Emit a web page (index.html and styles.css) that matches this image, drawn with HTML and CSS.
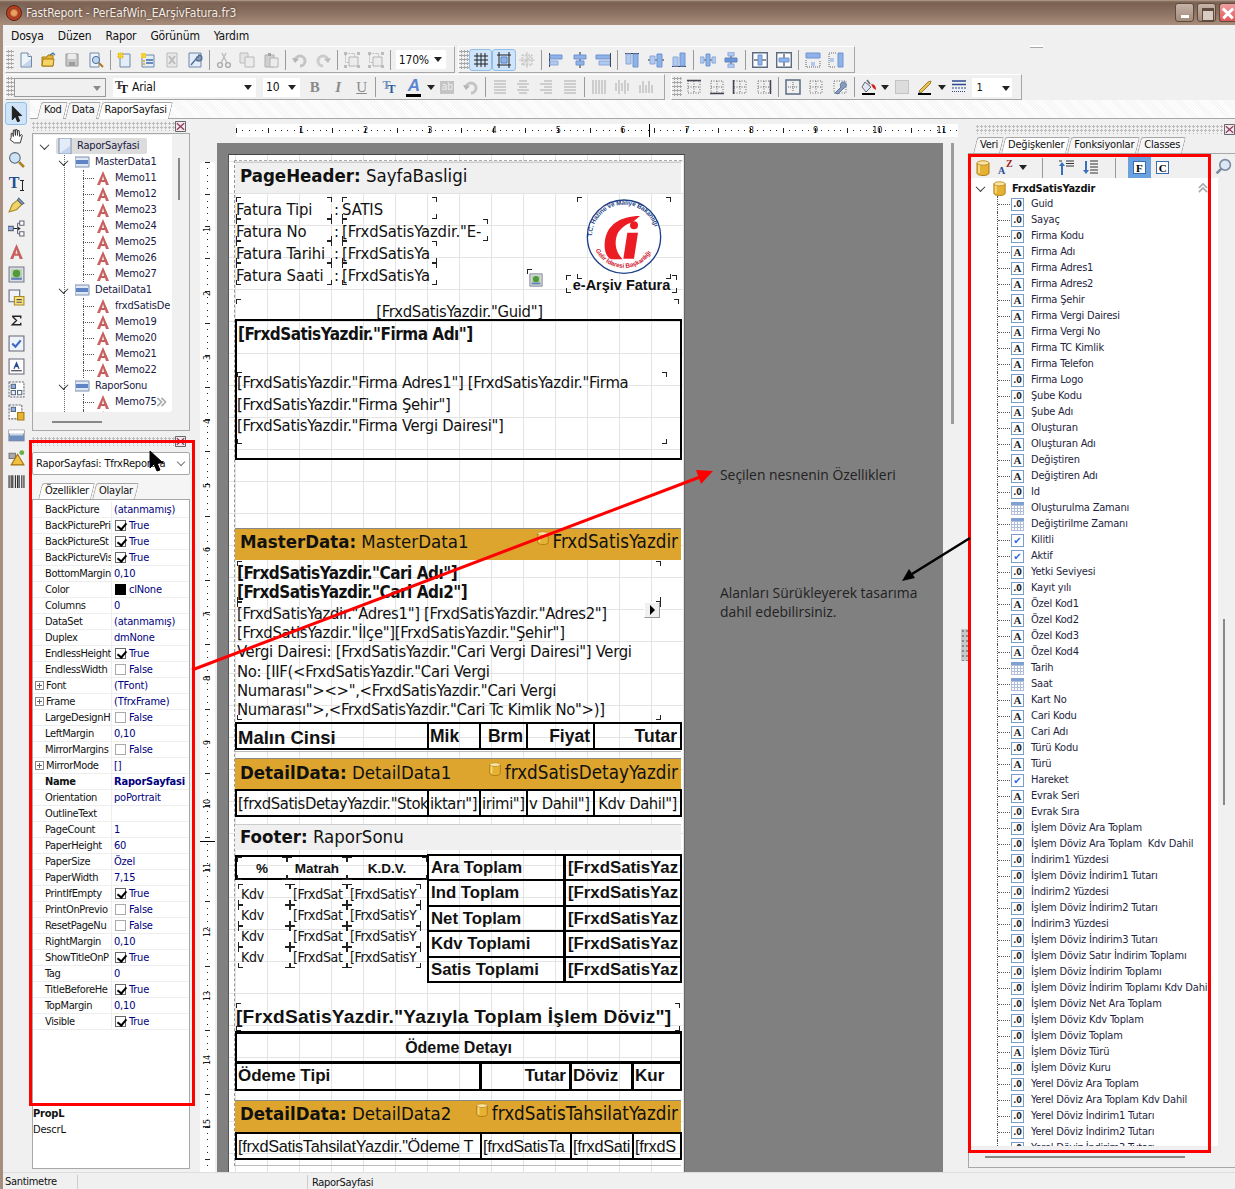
FILE: index.html
```html
<!DOCTYPE html>
<html lang="tr">
<head>
<meta charset="utf-8">
<title>FastReport</title>
<link rel="stylesheet" href="styles.css">
</head>
<body>
<svg class="defs" width="0" height="0">
  <symbol id="new" viewBox="0 0 16 16"><path d="M3 1h7l3.5 3.5V15H3z" fill="#eef3fa" stroke="#6f88a8"/><path d="M10 1v3.5h3.5" fill="#fff" stroke="#6f88a8"/><path d="M4 14h9V7z" fill="#c6d6ea"/></symbol>
  <symbol id="open" viewBox="0 0 16 16"><path d="M1 5h5l1-2h5v11H1z" fill="#e8b530" stroke="#a67a10"/><path d="M2 7h11l-1 7H1z" fill="#f6d568" stroke="#a67a10"/><path d="M9 3l3-2 2 2" fill="none" stroke="#3a78c0" stroke-width="1.3"/></symbol>
  <symbol id="save" viewBox="0 0 16 16"><path d="M2 2h12v12H2z" fill="#c6c6c6" stroke="#9a9a9a"/><path d="M4 2h8v5H4z" fill="#ececec"/><path d="M5 10h6v4H5z" fill="#9d9d9d"/></symbol>
  <symbol id="prev" viewBox="0 0 16 16"><path d="M2 1h9v14H2z" fill="#eef3fa" stroke="#6f88a8"/><circle cx="8" cy="8" r="3.6" fill="#bcd6f2" stroke="#4f6f98"/><path d="M11 11l4 4" stroke="#b07818" stroke-width="2"/></symbol>
  <symbol id="page" viewBox="0 0 16 16"><path d="M3 2h10v13H3z" fill="#e3ecf7" stroke="#6f88a8"/><path d="M1 1h5v5H1z" fill="#f4d030" stroke="#d8a810" stroke-dasharray="1 1"/></symbol>
  <symbol id="dlg" viewBox="0 0 16 16"><path d="M2 3h12v12H2z" fill="#e3ecf7" stroke="#6f88a8"/><path d="M1 1h5v5H1z" fill="#f4d030"/><path d="M6 8h7M6 11h7" stroke="#3a6ab0" stroke-width="1.5"/><path d="M3 8h2v2H3zM3 11h2v2H3z" fill="#e8b530"/></symbol>
  <symbol id="del" viewBox="0 0 16 16"><path d="M3 1h10v14H3z" fill="#e8e8e8" stroke="#bbb"/><path d="M5 4l6 8M11 4l-6 8" stroke="#bbb" stroke-width="2"/></symbol>
  <symbol id="opt" viewBox="0 0 16 16"><path d="M2 1h12v14H2z" fill="#e3ecf7" stroke="#6f88a8"/><path d="M4 13l5-6M9 7a3 3 0 1 0 3-4l-1 2h-1z" fill="#8c9cb0" stroke="#4f6f98" stroke-width="1.4"/></symbol>
  <symbol id="cut" viewBox="0 0 16 16"><path d="M10 1L5 11M6 1l5 10" stroke="#bcbcbc" stroke-width="1.4"/><circle cx="4" cy="13" r="2.4" fill="none" stroke="#aaa" stroke-width="1.4"/><circle cx="12" cy="13" r="2.4" fill="none" stroke="#aaa" stroke-width="1.4"/></symbol>
  <symbol id="copy" viewBox="0 0 16 16"><path d="M1 1h8v10H1z" fill="#e4e4e4" stroke="#bcbcbc"/><path d="M6 5h9v10H6z" fill="#ececec" stroke="#b8b8b8"/></symbol>
  <symbol id="paste" viewBox="0 0 16 16"><path d="M2 3h9v12H2z" fill="#d0d0d0" stroke="#b0b0b0"/><path d="M5 1h3v3H5z" fill="#a4a4a4"/><path d="M7 6h8v9H7z" fill="#ececec" stroke="#b4b4b4"/></symbol>
  <symbol id="undo" viewBox="0 0 16 16"><path d="M3 9a5 5 0 1 1 5 5" fill="none" stroke="#c4c4c4" stroke-width="3"/><path d="M0 6l3 5 4-4z" fill="#b4b4b4"/></symbol>
  <symbol id="redo" viewBox="0 0 16 16"><path d="M13 9a5 5 0 1 0-5 5" fill="none" stroke="#cccccc" stroke-width="3"/><path d="M16 6l-3 5-4-4z" fill="#bcbcbc"/></symbol>
  <symbol id="grp" viewBox="0 0 16 16"><path d="M1.5 1.5h9v9h-9z" fill="none" stroke="#bcbcbc" stroke-dasharray="2 1"/><path d="M5 5h9v9H5z" fill="#ececec" stroke="#b4b4b4"/><path d="M0 0h3v3H0zM13 0h3v3h-3zM0 13h3v3H0zM13 13h3v3h-3z" fill="#bcbcbc"/></symbol>
  <symbol id="grid" viewBox="0 0 16 16"><path d="M1 4h14M1 8h14M1 12h14M4 1v14M8 1v14M12 1v14" stroke="#222" fill="none"/></symbol>
  <symbol id="galign" viewBox="0 0 16 16"><path d="M1 3h14M1 13h14M3 0v16M13 0v16" stroke="#222" fill="none"/><path d="M5 5h6v6H5z" fill="#8fb3e8" stroke="#5b83c0"/></symbol>
  <symbol id="fit" viewBox="0 0 16 16"><path d="M3 3h10v10H3z" fill="#e8e8e8" stroke="#bcbcbc" stroke-dasharray="2 1"/><path d="M3 13L13 3M8 0v16M0 8h16" stroke="#c4c4c4"/></symbol>
  <symbol id="al1" viewBox="0 0 16 16"><path d="M1.500 1v14" stroke="#445"/><path d="M2 3h12v4H2z" fill="#8fb3e8" stroke="#6e94d0"/><path d="M2 9h8v4H2z" fill="#b0caf0" stroke="#8aa8d8"/></symbol>
  <symbol id="al2" viewBox="0 0 16 16"><path d="M8 0v16" stroke="#222"/><path d="M2 3h12v4H2z" fill="#8fb3e8" stroke="#6e94d0"/><path d="M4 9h8v4H4z" fill="#8fb3e8" stroke="#6e94d0"/></symbol>
  <symbol id="al3" viewBox="0 0 16 16"><path d="M1 3h14v4H1z" fill="#8fb3e8" stroke="#6e94d0"/><path d="M4 9h11v4H4z" fill="#b0caf0" stroke="#8aa8d8"/><path d="M15.500 1v14" stroke="#445"/></symbol>
  <symbol id="al4" viewBox="0 0 16 16"><path d="M1 1.500h14" stroke="#445"/><path d="M2 2h5v10H2z" fill="#b0caf0" stroke="#8aa8d8"/><path d="M9 2h5v13H9z" fill="#8fb3e8" stroke="#6e94d0"/></symbol>
  <symbol id="al5" viewBox="0 0 16 16"><path d="M0 8h16" stroke="#222"/><path d="M2 4h5v8H2z" fill="#b0caf0" stroke="#8aa8d8"/><path d="M9 2h5v13H9z" fill="#8fb3e8" stroke="#6e94d0"/></symbol>
  <symbol id="al6" viewBox="0 0 16 16"><path d="M1 14.500h14" stroke="#445"/><path d="M2 5h5v9H2z" fill="#b0caf0" stroke="#8aa8d8"/><path d="M9 1h5v13H9z" fill="#8fb3e8" stroke="#6e94d0"/></symbol>
  <symbol id="dist1" viewBox="0 0 16 16"><path d="M0 8h16" stroke="#222"/><path d="M0 5h4v6H0zM12 5h4v6h-4z" fill="#b0caf0" stroke="#8aa8d8"/><path d="M6 2h4v12H6z" fill="#8fb3e8" stroke="#6e94d0"/></symbol>
  <symbol id="dist2" viewBox="0 0 16 16"><path d="M8 0v16" stroke="#222"/><path d="M5 0h6v4H5zM5 12h6v4H5z" fill="#b0caf0" stroke="#8aa8d8"/><path d="M2 6h12v4H2z" fill="#6e94d8" stroke="#5b83c0"/></symbol>
  <symbol id="cen1" viewBox="0 0 16 16"><path d="M.7.7h14.600v14.600H.7z" fill="#fff" stroke="#5b6c80" stroke-width="1.4"/><path d="M2 8h12" stroke="#222"/><path d="M6 3h4v10H6z" fill="#8fb3e8" stroke="#6e94d0"/></symbol>
  <symbol id="cen2" viewBox="0 0 16 16"><path d="M.7.7h14.600v14.600H.7z" fill="#fff" stroke="#5b6c80" stroke-width="1.4"/><path d="M8 2v12" stroke="#222"/><path d="M3 6h10v4H3z" fill="#8fb3e8" stroke="#6e94d0"/></symbol>
  <symbol id="size1" viewBox="0 0 16 16"><path d="M1 1h14v5H1z" fill="#8fb3e8" stroke="#6e94d0"/><path d="M1 8v7h14V8" fill="none" stroke="#666" stroke-dasharray="1 1"/><path d="M6 10h4v4H6z" fill="#b0caf0"/></symbol>
  <symbol id="size2" viewBox="0 0 16 16"><path d="M10 1h5v14h-5z" fill="#8fb3e8" stroke="#6e94d0"/><path d="M8 1H1v14h7" fill="none" stroke="#666" stroke-dasharray="1 1"/><path d="M2 6h4v4H2z" fill="#b0caf0"/></symbol>
  <symbol id="lines" viewBox="0 0 16 16"><path d="M2 2h12M2 5h12M2 8h12M2 11h12M2 14h12" stroke="#aaa"/></symbol>
  <symbol id="lines2" viewBox="0 0 16 16"><path d="M4 2h8M2 5h12M4 8h8M2 11h12M4 14h8" stroke="#aaa"/></symbol>
  <symbol id="lines3" viewBox="0 0 16 16"><path d="M6 2h8M2 5h12M6 8h8M2 11h12M6 14h8" stroke="#aaa"/></symbol>
  <symbol id="vl1" viewBox="0 0 16 16"><path d="M2 1v14M5 1v14M8 1v14M11 1v14M14 1v14" stroke="#aaa"/></symbol>
  <symbol id="vl2" viewBox="0 0 16 16"><path d="M2 4v8M5 1v14M8 4v8M11 1v14M14 4v8" stroke="#aaa"/></symbol>
  <symbol id="vl3" viewBox="0 0 16 16"><path d="M2 6v8M5 2v12M8 6v8M11 2v12M14 6v8" stroke="#aaa"/></symbol>
  <symbol id="fr" viewBox="0 0 16 16"><path d="M2 2h12v12H2zM8 2v12M2 8h12" fill="none" stroke="#666" stroke-dasharray="1 1.500"/></symbol>
  <symbol id="frt" viewBox="0 0 16 16"><path d="M2 2h12v12H2zM8 2v12M2 8h12" fill="none" stroke="#666" stroke-dasharray="1 1.500"/><path d="M1 1.500h14" stroke="#445" stroke-width="1.500"/></symbol>
  <symbol id="frb" viewBox="0 0 16 16"><path d="M2 2h12v12H2zM8 2v12M2 8h12" fill="none" stroke="#666" stroke-dasharray="1 1.500"/><path d="M1 14.500h14" stroke="#445" stroke-width="1.500"/></symbol>
  <symbol id="frl" viewBox="0 0 16 16"><path d="M2 2h12v12H2zM8 2v12M2 8h12" fill="none" stroke="#666" stroke-dasharray="1 1.500"/><path d="M1.500 1v14" stroke="#445" stroke-width="1.500"/></symbol>
  <symbol id="frr" viewBox="0 0 16 16"><path d="M2 2h12v12H2zM8 2v12M2 8h12" fill="none" stroke="#666" stroke-dasharray="1 1.500"/><path d="M14.500 1v14" stroke="#445" stroke-width="1.500"/></symbol>
  <symbol id="fra" viewBox="0 0 16 16"><path d="M1 1h14v14H1z" fill="none" stroke="#5b6c80" stroke-width="1.500"/><path d="M8 3v10M3 8h10" stroke="#666" stroke-dasharray="1 1"/></symbol>
  <symbol id="frw" viewBox="0 0 16 16"><path d="M2 2h12v12H2z" fill="none" stroke="#666" stroke-dasharray="1 1.500"/><path d="M3 14l6-6a3 3 0 1 1 3 1l-6 6z" fill="#8a9cb8" stroke="#5a7aa8"/></symbol>
  <symbol id="fill" viewBox="0 0 16 16"><path d="M4 3l6 5-5 5-4-5z" fill="#dfe8f2" stroke="#667"/><path d="M6 1l3 4" stroke="#667" stroke-width="1.500"/><path d="M10 5c4 0 5 3 5 6l-3-2z" fill="#d02020"/><path d="M1 14h13v2H1z"/></symbol>
  <symbol id="pen" viewBox="0 0 16 16"><path d="M2 12l9-9 3-1-1 3-9 9z" fill="#e8bf50" stroke="#a08030"/><path d="M2 12l2 2-3 1z" fill="#6f90c0"/><path d="M1 14h13v2H1z"/></symbol>
  <symbol id="linest" viewBox="0 0 16 16"><path d="M1 2h14M1 5.500h14" stroke="#2a4a90" stroke-width="1.300"/><path d="M1 9h14" stroke="#2a4a90" stroke-dasharray="2 1"/><path d="M1 12.500h14" stroke="#2a4a90" stroke-dasharray="1 1"/></symbol>
  <symbol id="arrow" viewBox="0 0 16 16"><path d="M4 1v13l3-3 2 5 2-1-2-5h4z" fill="#222" stroke="#000" stroke-width=".6"/></symbol>
  <symbol id="hand" viewBox="0 0 16 16"><path d="M3 9V5l1.500 0 .5 3V2l1.500 0 .5 5V1.500h1.500L9 7V2.500h1.500L11 8l1.500-2 1 1-2 7H6L2 11z" fill="#fff" stroke="#333" stroke-width=".9"/></symbol>
  <symbol id="mag" viewBox="0 0 16 16"><circle cx="6.500" cy="6.500" r="5" fill="#cfe2f6" stroke="#567"/><path d="M10.500 10.500l4.500 4.500" stroke="#b08020" stroke-width="2.500"/></symbol>
  <symbol id="brush" viewBox="0 0 16 16"><path d="M9 3l4 4-5 5-7 2 3-7z" fill="#f0d468" stroke="#a88828"/><path d="M10 1l5 5-2 1-4-4z" fill="#8aa8c8" stroke="#567"/></symbol>
  <symbol id="conn" viewBox="0 0 16 16"><path d="M0 6h5v4H0z" fill="#8fb3e8" stroke="#667"/><path d="M5 8h4" stroke="#222"/><path d="M9 6l3 2-3 2z" fill="#222"/><path d="M11 1h4v4h-4zM11 11h4v4h-4z" fill="#fff" stroke="#667"/><path d="M9 3h2M9 13h2M9 3v10" stroke="#667"/></symbol>
  <symbol id="redA" viewBox="0 0 16 16"><path d="M8 1L2 15h3l1-3h4l1 3h3L8 1zM7 10l1-4 1 4z" fill="#c8605e" fill-rule="evenodd"/></symbol>
  <symbol id="pic" viewBox="0 0 16 16"><path d="M1 1h14v14H1z" fill="#d8dee8" stroke="#778"/><path d="M3 3h10v10H3z" fill="#bcd0a8"/><circle cx="8" cy="7" r="3.500" fill="#4f9a3a"/><path d="M3 11h10v2H3z" fill="#5f7fbf"/></symbol>
  <symbol id="sub" viewBox="0 0 16 16"><path d="M1 1h10v11H1z" fill="#eef3fa" stroke="#667"/><path d="M6 7h9v8H6z" fill="#f6e27a" stroke="#a88828"/><path d="M8 10h5M8 12.500h5" stroke="#555"/></symbol>
  <symbol id="sigma" viewBox="0 0 16 16"><path d="M4 4h8v2M4 4l4 4-4 4h8v-2" fill="none" stroke="#222" stroke-width="1.300"/></symbol>
  <symbol id="chk" viewBox="0 0 16 16"><path d="M1 1h14v14H1z" fill="#eef3fa" stroke="#667"/><path d="M4 8l3 3 5-6" fill="none" stroke="#3a66c8" stroke-width="2"/></symbol>
  <symbol id="rich" viewBox="0 0 16 16"><path d="M1 1h14v14H1z" fill="#fff" stroke="#667"/><path d="M8 3L5 10h1.500l.5-1.500h2L9.500 10H11z" fill="#2a4a90"/><path d="M3 12h10" stroke="#333"/></symbol>
  <symbol id="frm" viewBox="0 0 16 16"><path d="M1 1h14v14H1z" fill="#fff" stroke="#667" stroke-dasharray="2 1"/><path d="M3 3h4v4H3z" fill="#8fb3e8" stroke="#567"/><path d="M9 9h4v4H9z" fill="#fff" stroke="#567"/><path d="M3 9h4v4H3z" fill="#eef" stroke="#567"/></symbol>
  <symbol id="frmdb" viewBox="0 0 16 16"><path d="M1 1h12v13H1z" fill="#fff" stroke="#667" stroke-dasharray="2 1"/><path d="M3 3h4v4H3z" fill="#8fb3e8" stroke="#567"/><path d="M9 8h6v7H9z" fill="#e8b530" stroke="#a67a10"/></symbol>
  <symbol id="bandg" viewBox="0 0 16 16"><path d="M1 3h14v10H1z" fill="#c8d4e4" stroke="#667"/><path d="M1 3h14v3H1z" fill="#fff"/><path d="M1 8h14v5H1z" fill="#6f8fc0"/></symbol>
  <symbol id="shape" viewBox="0 0 16 16"><path d="M1 3h6v5H1z" fill="#aaa" stroke="#777"/><path d="M9 4l6 10H3z" fill="#f2c040" stroke="#a07010"/><circle cx="13" cy="2.500" r="2.300" fill="#68b048"/></symbol>
  <symbol id="barcode" viewBox="0 0 16 16"><path d="M1 2v12M3 2v12M4.500 2v12M7 2v12M9 2v12M10.500 2v12M13 2v12M15 2v12" stroke="#333" stroke-width="1.100"/></symbol>
  <symbol id="bandico" viewBox="0 0 16 16"><path d="M0 3h14v10H0z" fill="#dfe8f4" stroke="#7890b0"/><path d="M1 6h12v4H1z" fill="#5f85c4"/></symbol>
  <symbol id="pageico" viewBox="0 0 16 16"><path d="M2 0h12v16H2z" fill="#e4edf7" stroke="#7890b0"/><path d="M3 15h10V8z" fill="#c3d4ea"/></symbol>
  <symbol id="db" viewBox="0 0 16 16"><path d="M2 3v10c0 1.500 2.500 2.500 6 2.500s6-1 6-2.500V3z" fill="#e6b234" stroke="#b07a10"/><ellipse cx="8" cy="3" rx="6" ry="2.200" fill="#f8e4a0" stroke="#c0902a"/><path d="M4 5v8" stroke="#f6d880" stroke-width="2"/></symbol>
  <symbol id="sortup" viewBox="0 0 16 16"><path d="M4 3v12" stroke="#3a6fc0" stroke-width="2"/><path d="M1 6l3-4 3 4z" fill="#3a6fc0"/><path d="M1 1h3M8 1h8M8 3.500h8M8 6h8" stroke="#333"/></symbol>
  <symbol id="sortdn" viewBox="0 0 16 16"><path d="M4 1v11" stroke="#3a6fc0" stroke-width="2"/><path d="M1 10l3 4 3-4z" fill="#3a6fc0"/><path d="M8 1h8M8 4h8M8 7h8M8 10h8M8 13h8" stroke="#333"/></symbol>
  <symbol id="search" viewBox="0 0 16 16"><circle cx="9.500" cy="6.500" r="5" fill="#dbe7f4" stroke="#7a8aa0" stroke-width="1.500"/><path d="M6 10l-4.500 4.500" stroke="#7a8aa0" stroke-width="2.500"/></symbol>
  <symbol id="closep" viewBox="0 0 12 12"><path d="M.5.500h11v11H.5z" fill="#f6e8ee" stroke="#555"/><path d="M2 2.500l8 7M10 2.500l-8 7" stroke="#8a3a5a" stroke-width="1.300"/></symbol>
  <symbol id="dchev" viewBox="0 0 12 12"><path d="M1 6l5-5 5 5M1 11l5-5 5 5" fill="none" stroke="#aaa" stroke-width="2"/></symbol>
</svg>

<div class="app">
  <header class="titlebar">
    <span class="app-ico"></span>
    <span class="app-title">FastReport - PerEafWin_EArşivFatura.fr3</span>
    <span class="winbtns">
      <span class="wb wb-min"></span>
      <span class="wb wb-max"></span>
      <span class="wb wb-close"></span>
    </span>
  </header>

  <div class="chrome">
    <nav class="menubar">
      <span>Dosya</span><span>Düzen</span><span>Rapor</span><span>Görünüm</span><span>Yardım</span>
      <i class="mini-bar"></i>
    </nav>

    <div class="tbrow tbrow-1">
      <div class="toolbar tb-std">
        <i class="grip-v"></i>
        <b class="tb"><svg><use href="#new"/></svg></b><b class="tb"><svg><use href="#open"/></svg></b><b class="tb"><svg><use href="#save"/></svg></b><b class="tb"><svg><use href="#prev"/></svg></b><i class="sep"></i>
        <b class="tb"><svg><use href="#page"/></svg></b><b class="tb"><svg><use href="#dlg"/></svg></b><b class="tb"><svg><use href="#del"/></svg></b><b class="tb"><svg><use href="#opt"/></svg></b><i class="sep"></i>
        <b class="tb"><svg><use href="#cut"/></svg></b><b class="tb"><svg><use href="#copy"/></svg></b><b class="tb"><svg><use href="#paste"/></svg></b><i class="sep"></i>
        <b class="tb"><svg><use href="#undo"/></svg></b><b class="tb"><svg><use href="#redo"/></svg></b><i class="sep"></i>
        <b class="tb"><svg><use href="#grp"/></svg></b><b class="tb"><svg><use href="#grp"/></svg></b><i class="sep"></i>
        <span class="combo combo-zoom">170%<i class="drop"></i></span>
      </div>
      <div class="toolbar tb-align">
        <i class="grip-v"></i>
        <b class="tb on"><svg><use href="#grid"/></svg></b><b class="tb on"><svg><use href="#galign"/></svg></b><b class="tb"><svg><use href="#fit"/></svg></b><i class="sep"></i>
        <b class="tb"><svg><use href="#al1"/></svg></b><b class="tb"><svg><use href="#al2"/></svg></b><b class="tb"><svg><use href="#al3"/></svg></b><i class="sep"></i>
        <b class="tb"><svg><use href="#al4"/></svg></b><b class="tb"><svg><use href="#al5"/></svg></b><b class="tb"><svg><use href="#al6"/></svg></b><i class="sep"></i>
        <b class="tb"><svg><use href="#dist1"/></svg></b><b class="tb"><svg><use href="#dist2"/></svg></b><i class="sep"></i>
        <b class="tb"><svg><use href="#cen1"/></svg></b><b class="tb"><svg><use href="#cen2"/></svg></b><i class="sep"></i>
        <b class="tb"><svg><use href="#size1"/></svg></b><b class="tb"><svg><use href="#size2"/></svg></b>
      </div>
    </div>

    <div class="tbrow tbrow-2">
      <div class="toolbar tb-text">
        <i class="grip-v"></i>
        <span class="combo combo-style"><i class="drop gray"></i></span>
        <span class="combo combo-font"><span class="tt-g">T<em>T</em></span>Arial<i class="drop"></i></span>
        <span class="combo combo-size">10<i class="drop"></i></span>
        <b class="tb fmt f-b">B</b><b class="tb fmt f-i">I</b><b class="tb fmt f-u">U</b><i class="sep"></i>
        <b class="tb"><span class="tt-g tt-blue">T<em>T</em></span></b>
        <b class="tb tb-colorA"><span class="glyph-a">A</span><i class="colorbar"></i></b><i class="drop free"></i>
        <b class="tb"><span class="ab">ab</span></b><b class="tb"><svg><use href="#undo"/></svg></b><i class="sep"></i>
        <b class="tb"><svg><use href="#lines"/></svg></b><b class="tb"><svg><use href="#lines2"/></svg></b><b class="tb"><svg><use href="#lines3"/></svg></b><b class="tb"><svg><use href="#lines"/></svg></b><i class="sep"></i>
        <b class="tb"><svg><use href="#vl1"/></svg></b><b class="tb"><svg><use href="#vl2"/></svg></b><b class="tb"><svg><use href="#vl3"/></svg></b>
      </div>
      <div class="toolbar tb-frame">
        <i class="grip-v"></i>
        <b class="tb"><svg><use href="#frt"/></svg></b><b class="tb"><svg><use href="#frb"/></svg></b><b class="tb"><svg><use href="#frl"/></svg></b><b class="tb"><svg><use href="#frr"/></svg></b><i class="sep"></i>
        <b class="tb"><svg><use href="#fra"/></svg></b><b class="tb"><svg><use href="#fr"/></svg></b><b class="tb"><svg><use href="#frw"/></svg></b><i class="sep"></i>
        <b class="tb"><svg><use href="#fill"/></svg></b><i class="drop free"></i>
        <b class="tb"><span class="graybox"></span></b>
        <b class="tb"><svg><use href="#pen"/></svg></b><i class="drop free"></i>
        <b class="tb"><svg><use href="#linest"/></svg></b>
        <span class="combo combo-width">1<i class="drop"></i></span>
      </div>
    </div>

    <div class="main">
      <aside class="toolcol">
        <b class="tool on"><svg><use href="#arrow"/></svg></b>
        <b class="tool"><svg><use href="#hand"/></svg></b>
        <b class="tool"><svg><use href="#mag"/></svg></b>
        <b class="tool"><span class="tool-t">T</span><i class="ibeam"></i></b>
        <b class="tool"><svg><use href="#brush"/></svg></b>
        <b class="tool"><svg><use href="#conn"/></svg></b>
        <b class="tool"><svg><use href="#redA"/></svg></b>
        <b class="tool"><svg><use href="#pic"/></svg></b>
        <b class="tool"><svg><use href="#sub"/></svg></b>
        <b class="tool"><svg><use href="#sigma"/></svg></b>
        <b class="tool"><svg><use href="#chk"/></svg></b>
        <b class="tool"><svg><use href="#rich"/></svg></b>
        <b class="tool"><svg><use href="#frm"/></svg></b>
        <b class="tool"><svg><use href="#frmdb"/></svg></b>
        <b class="tool"><svg><use href="#bandg"/></svg></b>
        <b class="tool"><svg><use href="#shape"/></svg></b>
        <b class="tool"><svg><use href="#barcode"/></svg></b>
      </aside>

      <div class="center">
        <div class="tabrow">
          <span class="tab">Kod</span><span class="tab">Data</span><span class="tab active">RaporSayfasi</span>
        </div>

        <div class="panes">
          <section class="leftpanes">
            <div class="griprow"><i class="grip-h"></i><svg class="closep"><use href="#closep"/></svg></div>
            <div class="treebox">
              <ul class="objtree">
                <li class="lv0"><i class="caret"></i><span class="sel"><svg class="ico"><use href="#pageico"/></svg>RaporSayfasi</span></li>
                <li class="lv1"><i class="caret"></i><svg class="ico"><use href="#bandico"/></svg>MasterData1</li>
                <li class="lv2"><svg class="ico"><use href="#redA"/></svg>Memo11</li>
                <li class="lv2"><svg class="ico"><use href="#redA"/></svg>Memo12</li>
                <li class="lv2"><svg class="ico"><use href="#redA"/></svg>Memo23</li>
                <li class="lv2"><svg class="ico"><use href="#redA"/></svg>Memo24</li>
                <li class="lv2"><svg class="ico"><use href="#redA"/></svg>Memo25</li>
                <li class="lv2"><svg class="ico"><use href="#redA"/></svg>Memo26</li>
                <li class="lv2"><svg class="ico"><use href="#redA"/></svg>Memo27</li>
                <li class="lv1"><i class="caret"></i><svg class="ico"><use href="#bandico"/></svg>DetailData1</li>
                <li class="lv2"><svg class="ico"><use href="#redA"/></svg>frxdSatisDe</li>
                <li class="lv2"><svg class="ico"><use href="#redA"/></svg>Memo19</li>
                <li class="lv2"><svg class="ico"><use href="#redA"/></svg>Memo20</li>
                <li class="lv2"><svg class="ico"><use href="#redA"/></svg>Memo21</li>
                <li class="lv2"><svg class="ico"><use href="#redA"/></svg>Memo22</li>
                <li class="lv1"><i class="caret"></i><svg class="ico"><use href="#bandico"/></svg>RaporSonu</li>
                <li class="lv2"><svg class="ico"><use href="#redA"/></svg>Memo75<svg class="chev"><use href="#dchev"/></svg></li>
                <li class="lv2"><svg class="ico"><use href="#redA"/></svg></li>
              </ul>
              <i class="vthumb"></i>
              <i class="hthumb"></i>
            </div>

            <div class="griprow griprow-2"><i class="grip-h"></i><svg class="closep"><use href="#closep"/></svg></div>
            <div class="objcombo"><span>RaporSayfasi: TfrxReportPa</span><i class="chevdown"></i></div>
            <div class="subtabs">
              <span class="tab active">Özellikler</span><span class="tab">Olaylar</span>
            </div>
            <div class="propgrid">
              <div class="pr"><span>BackPicture</span><span>(atanmamış)</span></div>
              <div class="pr"><span>BackPicturePri</span><span><i class="cb on"></i>True</span></div>
              <div class="pr"><span>BackPictureSt</span><span><i class="cb on"></i>True</span></div>
              <div class="pr"><span>BackPictureVis</span><span><i class="cb on"></i>True</span></div>
              <div class="pr"><span>BottomMargin</span><span>0,10</span></div>
              <div class="pr"><span>Color</span><span><i class="swatch"></i>clNone</span></div>
              <div class="pr"><span>Columns</span><span>0</span></div>
              <div class="pr"><span>DataSet</span><span>(atanmamış)</span></div>
              <div class="pr"><span>Duplex</span><span>dmNone</span></div>
              <div class="pr"><span>EndlessHeight</span><span><i class="cb on"></i>True</span></div>
              <div class="pr"><span>EndlessWidth</span><span><i class="cb"></i>False</span></div>
              <div class="pr exp"><span><i class="plus"></i>Font</span><span>(TFont)</span></div>
              <div class="pr exp"><span><i class="plus"></i>Frame</span><span>(TfrxFrame)</span></div>
              <div class="pr"><span>LargeDesignH</span><span><i class="cb"></i>False</span></div>
              <div class="pr"><span>LeftMargin</span><span>0,10</span></div>
              <div class="pr"><span>MirrorMargins</span><span><i class="cb"></i>False</span></div>
              <div class="pr exp"><span><i class="plus"></i>MirrorMode</span><span>[]</span></div>
              <div class="pr bold"><span>Name</span><span>RaporSayfasi</span></div>
              <div class="pr"><span>Orientation</span><span>poPortrait</span></div>
              <div class="pr"><span>OutlineText</span><span></span></div>
              <div class="pr"><span>PageCount</span><span>1</span></div>
              <div class="pr"><span>PaperHeight</span><span>60</span></div>
              <div class="pr"><span>PaperSize</span><span>Özel</span></div>
              <div class="pr"><span>PaperWidth</span><span>7,15</span></div>
              <div class="pr"><span>PrintIfEmpty</span><span><i class="cb on"></i>True</span></div>
              <div class="pr"><span>PrintOnPrevio</span><span><i class="cb"></i>False</span></div>
              <div class="pr"><span>ResetPageNu</span><span><i class="cb"></i>False</span></div>
              <div class="pr"><span>RightMargin</span><span>0,10</span></div>
              <div class="pr"><span>ShowTitleOnP</span><span><i class="cb on"></i>True</span></div>
              <div class="pr"><span>Tag</span><span>0</span></div>
              <div class="pr"><span>TitleBeforeHe</span><span><i class="cb on"></i>True</span></div>
              <div class="pr"><span>TopMargin</span><span>0,10</span></div>
              <div class="pr"><span>Visible</span><span><i class="cb on"></i>True</span></div>
            </div>
            <div class="descbox"><b>PropL</b><span>DescrL</span></div>
          </section>

          <section class="designer">
            <div class="hruler-row">
              <div class="hruler">
                <span>1</span><span>2</span><span>3</span><span>4</span><span>5</span><span>6</span><span>7</span><span>8</span><span>9</span><span>10</span><span>11</span>
                <i class="hmark"></i>
              </div>
            </div>
            <div class="design-body">
              <div class="vruler">
                <span>1</span><span>2</span><span>3</span><span>4</span><span>5</span><span>6</span><span>7</span><span>8</span><span>9</span><span>10</span><span>11</span><span>12</span><span>13</span><span>14</span><span>15</span>
                <i class="vmark"></i>
              </div>
              <div class="workspace">
                <div class="page">
                  <div class="sheet">
                    <div class="band-title plain bt-head"><b>PageHeader:</b>&nbsp;SayfaBasligi</div>

                    <div class="header-body">
                      <div class="head-grid">
                        <span class="c">Fatura Tipi</span><span>:</span><span class="c">SATIS</span>
                        <span class="c">Fatura No</span><span>:</span><span class="c v-wide">[FrxdSatisYazdir."E-</span>
                        <span class="c">Fatura Tarihi</span><span>:</span><span class="c v-mid">[FrxdSatisYa</span>
                        <span class="c">Fatura Saati</span><span>:</span><span class="c v-mid">[FrxdSatisYa</span>
                      </div>
                      <svg class="pic-mini"><use href="#pic"/></svg>
                      <i class="c pic-mini-c"></i>
                      <svg class="logo" viewBox="0 0 360 330">
                        <defs>
                          <path id="arcTop" d="M66 140a96 96 0 0 1 192 0"/>
                          <path id="arcBot" d="M70 165a96 96 0 0 0 184 0"/>
                        </defs>
                        <circle cx="162" cy="140" r="110" fill="#fff" stroke="#1d3f86" stroke-width="4"/>
                        <text class="logo-top"><textPath href="#arcTop">T.C. Hazine ve Maliye Bakanlığı</textPath></text>
                        <text class="logo-bot"><textPath href="#arcBot" startOffset="7%">Gelir İdaresi Başkanlığı</textPath></text>
                        <path d="M210 78C150 78 108 105 104 160c-2 25 8 44 20 48h34c-18-18-26-42-18-70 6-20 28-36 48-42z" fill="#ec1c24"/>
                        <circle cx="192" cy="106" r="12" fill="#ec1c24"/>
                        <path d="M172 128h32l-12 78h-32z" fill="#ec1c24"/>
                      </svg>
                      <i class="c logo-c"></i>
                      <span class="c earsiv">e-Arşiv Fatura</span>
                      <div class="c guid">[FrxdSatisYazdir."Guid"]</div>
                    </div>

                    <div class="firma-box">
                      <div class="firma-name">[FrxdSatisYazdir."Firma Adı"]</div>
                      <div class="c firma-lines">
                        <div>[FrxdSatisYazdir."Firma Adres1"] [FrxdSatisYazdir."Firma</div>
                        <div>[FrxdSatisYazdir."Firma Şehir"]</div>
                        <div>[FrxdSatisYazdir."Firma Vergi Dairesi"]</div>
                      </div>
                    </div>

                    <div class="band-title gold bt-master"><b>MasterData:</b>&nbsp;MasterData1<span class="ds"><svg class="ds-ico"><use href="#db"/></svg>FrxdSatisYazdir</span></div>

                    <div class="master-body">
                      <div class="c cari">
                        <div>[FrxdSatisYazdir."Cari Adı"]</div>
                        <div>[FrxdSatisYazdir."Cari Adı2"]</div>
                      </div>
                      <div class="c master-text">
                        [FrxdSatisYazdir."Adres1"] [FrxdSatisYazdir."Adres2"]<br>
                        [FrxdSatisYazdir."İlçe"][FrxdSatisYazdir."Şehir"]<br>
                        Vergi Dairesi: [FrxdSatisYazdir."Cari Vergi Dairesi"] Vergi<br>
                        No: [IIF(&lt;FrxdSatisYazdir."Cari Vergi<br>
                        Numarası"&gt;&lt;&gt;",&lt;FrxdSatisYazdir."Cari Vergi<br>
                        Numarası"&gt;,&lt;FrxdSatisYazdir."Cari Tc Kimlik No"&gt;)]
                      </div>
                      <i class="more-btn"></i>
                    </div>

                    <div class="trow trow-head cols-item">
                      <span class="big">Malın Cinsi</span><span>Mik</span><span class="r">Brm</span><span class="r">Fiyat</span><span class="r">Tutar</span>
                    </div>
                    <div class="thin-rule"></div>

                    <div class="band-title gold bt-detail"><b>DetailData:</b>&nbsp;DetailData1<span class="ds"><svg class="ds-ico"><use href="#db"/></svg>frxdSatisDetayYazdir</span></div>
                    <div class="trow trow-data cols-item">
                      <span>[frxdSatisDetayYazdir."Stok</span><span>iktarı"]</span><span>irimi"]</span><span>v Dahil"]</span><span class="r">Kdv Dahil"]</span>
                    </div>

                    <div class="band-title plain bt-footer"><b>Footer:</b>&nbsp;RaporSonu</div>

                    <div class="footer-body">
                      <div class="footer-left">
                        <div class="kdv-head">
                          <span class="c">%</span><span class="c">Matrah</span><span class="c">K.D.V.</span>
                        </div>
                        <div class="kdv-rows">
                          <span class="c">Kdv</span><span class="c">[FrxdSat</span><span class="c">[FrxdSatisY</span>
                          <span class="c">Kdv</span><span class="c">[FrxdSat</span><span class="c">[FrxdSatisY</span>
                          <span class="c">Kdv</span><span class="c">[FrxdSat</span><span class="c">[FrxdSatisY</span>
                          <span class="c">Kdv</span><span class="c">[FrxdSat</span><span class="c">[FrxdSatisY</span>
                        </div>
                      </div>
                      <div class="footer-right">
                        <span>Ara Toplam</span><span>[FrxdSatisYaz</span>
                        <span>Ind Toplam</span><span>[FrxdSatisYaz</span>
                        <span>Net Toplam</span><span>[FrxdSatisYaz</span>
                        <span>Kdv Toplami</span><span>[FrxdSatisYaz</span>
                        <span>Satis Toplami</span><span>[FrxdSatisYaz</span>
                      </div>
                    </div>

                    <div class="c yaziyla">[FrxdSatisYazdir."Yazıyla Toplam İşlem Döviz"]</div>
                    <div class="odeme-title">Ödeme Detayı</div>
                    <div class="trow trow-odeme cols-pay">
                      <span>Ödeme Tipi</span><span class="r">Tutar</span><span>Döviz</span><span>Kur</span>
                    </div>

                    <div class="band-title gold bt-detail2"><b>DetailData:</b>&nbsp;DetailData2<span class="ds"><svg class="ds-ico"><use href="#db"/></svg>frxdSatisTahsilatYazdir</span></div>
                    <div class="trow trow-data2 cols-pay">
                      <span>[frxdSatisTahsilatYazdir."Ödeme T</span><span>[frxdSatisTa</span><span>[frxdSati</span><span>[frxdS</span>
                    </div>
                    <div class="thin-rule rule-end"></div>
                  </div>
                </div>
              </div>
              <div class="vstrip"><i class="strip-thumb"></i><i class="splitter"></i></div>
            </div>
          </section>

          <section class="rightpane">
            <div class="griprow griprow-r"><i class="grip-h"></i><svg class="closep"><use href="#closep"/></svg></div>
            <div class="rtabs">
              <span class="tab">Veri</span><span class="tab active">Değişkenler</span><span class="tab">Fonksiyonlar</span><span class="tab">Classes</span>
            </div>
            <div class="databox">
              <div class="datatools">
                <b class="tb"><svg><use href="#db"/></svg></b>
                <b class="tb"><span class="az"><em>Z</em>A</span></b><i class="drop free"></i><i class="sep sep-a"></i>
                <b class="tb"><svg><use href="#sortup"/></svg></b><b class="tb"><svg><use href="#sortdn"/></svg></b><i class="sep sep-b"></i>
                <b class="tb tb-on-strong"><span class="fc">F</span></b><b class="tb"><span class="fc">C</span></b>
                <svg class="search"><use href="#search"/></svg>
              </div>
              <div class="datatree">
                <div class="root"><i class="caret"></i><svg class="ico"><use href="#db"/></svg><b>FrxdSatisYazdir</b><svg class="chev-up"><use href="#dchev"/></svg></div>
                <ul class="fields">
                  <li><i class="ft">.0</i>Guid</li>
                  <li><i class="ft">.0</i>Sayaç</li>
                  <li><i class="ft">.0</i>Firma Kodu</li>
                  <li><i class="ft a">A</i>Firma Adı</li>
                  <li><i class="ft a">A</i>Firma Adres1</li>
                  <li><i class="ft a">A</i>Firma Adres2</li>
                  <li><i class="ft a">A</i>Firma Şehir</li>
                  <li><i class="ft a">A</i>Firma Vergi Dairesi</li>
                  <li><i class="ft a">A</i>Firma Vergi No</li>
                  <li><i class="ft a">A</i>Firma TC Kimlik</li>
                  <li><i class="ft a">A</i>Firma Telefon</li>
                  <li><i class="ft">.0</i>Firma Logo</li>
                  <li><i class="ft">.0</i>Şube Kodu</li>
                  <li><i class="ft a">A</i>Şube Adı</li>
                  <li><i class="ft a">A</i>Oluşturan</li>
                  <li><i class="ft a">A</i>Oluşturan Adı</li>
                  <li><i class="ft a">A</i>Değiştiren</li>
                  <li><i class="ft a">A</i>Değiştiren Adı</li>
                  <li><i class="ft">.0</i>Id</li>
                  <li><i class="ft d"></i>Oluşturulma Zamanı</li>
                  <li><i class="ft d"></i>Değiştirilme Zamanı</li>
                  <li><i class="ft k">✔</i>Kilitli</li>
                  <li><i class="ft k">✔</i>Aktif</li>
                  <li><i class="ft">.0</i>Yetki Seviyesi</li>
                  <li><i class="ft">.0</i>Kayıt yılı</li>
                  <li><i class="ft a">A</i>Özel Kod1</li>
                  <li><i class="ft a">A</i>Özel Kod2</li>
                  <li><i class="ft a">A</i>Özel Kod3</li>
                  <li><i class="ft a">A</i>Özel Kod4</li>
                  <li><i class="ft d"></i>Tarih</li>
                  <li><i class="ft d"></i>Saat</li>
                  <li><i class="ft a">A</i>Kart No</li>
                  <li><i class="ft a">A</i>Cari Kodu</li>
                  <li><i class="ft a">A</i>Cari Adı</li>
                  <li><i class="ft">.0</i>Türü Kodu</li>
                  <li><i class="ft a">A</i>Türü</li>
                  <li><i class="ft k">✔</i>Hareket</li>
                  <li><i class="ft a">A</i>Evrak Seri</li>
                  <li><i class="ft">.0</i>Evrak Sıra</li>
                  <li><i class="ft">.0</i>İşlem Döviz Ara Toplam</li>
                  <li><i class="ft">.0</i>İşlem Döviz Ara Toplam &nbsp;Kdv Dahil</li>
                  <li><i class="ft">.0</i>İndirim1 Yüzdesi</li>
                  <li><i class="ft">.0</i>İşlem Döviz İndirim1 Tutarı</li>
                  <li><i class="ft">.0</i>İndirim2 Yüzdesi</li>
                  <li><i class="ft">.0</i>İşlem Döviz İndirim2 Tutarı</li>
                  <li><i class="ft">.0</i>İndirim3 Yüzdesi</li>
                  <li><i class="ft">.0</i>İşlem Döviz İndirim3 Tutarı</li>
                  <li><i class="ft">.0</i>İşlem Döviz Satır İndirim Toplamı</li>
                  <li><i class="ft">.0</i>İşlem Döviz İndirim Toplamı</li>
                  <li><i class="ft">.0</i>İşlem Döviz İndirim Toplamı Kdv Dahil</li>
                  <li><i class="ft">.0</i>İşlem Döviz Net Ara Toplam</li>
                  <li><i class="ft">.0</i>İşlem Döviz Kdv Toplam</li>
                  <li><i class="ft">.0</i>İşlem Döviz Toplam</li>
                  <li><i class="ft a">A</i>İşlem Döviz Türü</li>
                  <li><i class="ft">.0</i>İşlem Döviz Kuru</li>
                  <li><i class="ft">.0</i>Yerel Döviz Ara Toplam</li>
                  <li><i class="ft">.0</i>Yerel Döviz Ara Toplam Kdv Dahil</li>
                  <li><i class="ft">.0</i>Yerel Döviz İndirim1 Tutarı</li>
                  <li><i class="ft">.0</i>Yerel Döviz İndirim2 Tutarı</li>
                  <li><i class="ft">.0</i>Yerel Döviz İndirim3 Tutarı</li>
                </ul>
              </div>
              <i class="data-hthumb"></i>
            </div>
          </section>
        </div>
      </div>
    </div>

    <footer class="statusbar">
      <span class="st-unit">Santimetre</span><span class="st-mid"></span><span class="st-page">RaporSayfasi</span>
    </footer>
  </div>

  <!-- annotations drawn over the screenshot -->
  <i class="redbox redbox-left"></i>
  <i class="redbox redbox-right"></i>
  <svg class="marks" viewBox="0 0 1235 1189">
    <path d="M192 670L700 477" stroke="#f00" stroke-width="3" fill="none"/>
    <path d="M713 471l-17-1 5 14z" fill="#f00"/>
    <path d="M970 538L912 574" stroke="#000" stroke-width="2.500" fill="none"/>
    <path d="M902 581l7-12 6 9z" fill="#000"/>
    <path d="M150 451v17l4-4 3 7 3-1-3-7h6z" fill="#000" stroke="#000"/>
  </svg>
  <p class="note note-1">Seçilen nesnenin Özellikleri</p>
  <p class="note note-2">Alanları Sürükleyerek tasarıma<br>dahil edebilirsiniz.</p>
</div>
</body>
</html>
```

FILE: styles.css
```css
* { box-sizing: border-box; }
html, body { margin: 0; padding: 0; background: #f0f0f0; }
body { width: 1235px; height: 1189px; overflow: hidden; }
.defs { position: absolute; }
i, b, em { font-style: normal; font-weight: normal; }
ul { list-style: none; margin: 0; padding: 0; }
p { margin: 0; }

.app {
  position: relative;
  width: 1235px;
  height: 1189px;
  display: flex;
  flex-direction: column;
  overflow: hidden;
  font-family: "DejaVu Sans", "Liberation Sans", sans-serif;
  font-stretch: condensed;
  font-size: 11px;
  letter-spacing: -.2px;
  color: #111;
  background: #f0f0f0;
}

/* title bar */
.titlebar {
  height: 25px;
  flex: none;
  display: flex;
  align-items: center;
  padding-left: 6px;
  background: linear-gradient(#8d7565 0, #7a6152 8%, #8c7262 50%, #aa8d7b 100%);
  border-top: 1px solid #a99484;
  color: #f0ece8;
}
.app-ico {
  width: 16px; height: 16px; border-radius: 50%;
  background: radial-gradient(circle, #e8a060 0 25%, #a04020 45%, #d03a20 70%, #5a2a20 100%);
  border: 1px solid #4a2418;
  margin-right: 4px;
}
.app-title { font-size: 12px; letter-spacing: -.1px; text-shadow: 0 0 3px #4a3226; }
.winbtns { margin-left: auto; display: flex; gap: 3px; margin-top: -1px; }
.wb {
  width: 19px; height: 19px;
  border: 1px solid #5f4a3e;
  border-radius: 3px;
  background: linear-gradient(#c8b4a8, #a08a7c);
  display: block;
  position: relative;
}
.wb-min::after { content: ""; position: absolute; left: 5px; top: 11px; width: 8px; height: 3px; background: #fff; }
.wb-max::after { content: ""; position: absolute; left: 4px; top: 4px; width: 10px; height: 9px; border: 1px solid #5f4a3e; border-top-width: 3px; background: #d8cbc2; }
.wb-close { width: 16px; border-right: 0; border-radius: 3px 0 0 3px; background: linear-gradient(#f0a0a0, #e05858); }
.wb-close::before, .wb-close::after { content: ""; position: absolute; left: 1px; top: 8px; width: 14px; height: 2.500px; background: #fff; transform: rotate(45deg); }
.wb-close::after { transform: rotate(-45deg); }

.chrome {
  flex: 1;
  min-height: 0;
  display: flex;
  flex-direction: column;
  border-left: 3px solid #a78d7d;
}

/* menu */
.menubar {
  height: 21px; flex: none;
  display: flex; align-items: center; gap: 14px;
  padding-left: 8px;
  font-size: 12px;
  letter-spacing: -.15px;
  color: #111;
  position: relative;
}
.mini-bar { position: absolute; left: 1027px; top: 20px; width: 13px; height: 3px; background: #fff; border-bottom: 1px solid #aaa; }

/* toolbars */
.tbrow { flex: none; display: flex; }
.tbrow-1 { height: 27px; gap: 3px; padding-left: 2px; }
.tbrow-2 { height: 26px; margin-top: 1px; gap: 6px; padding-left: 2px; }
.toolbar {
  display: flex; align-items: center;
  background: #f0f0f0;
  border: 1px solid #fff;
  border-right-color: #a6a6a6;
  border-bottom-color: #a6a6a6;
  height: 100%;
}
.tb-std { width: 450px; }
.tb-align { width: 397px; }
.tb-text { width: 660px; }
.tb-frame { width: 351px; }
.grip-v {
  width: 8px; height: 20px; flex: none;
  background: radial-gradient(circle at 1.500px 1.500px, #a8a8a8 1px, transparent 1.200px) 1px 0/3px 4px;
}
.tb-align .grip-v, .tb-frame .grip-v { width: 10px; }
.tb {
  width: 23.4px; height: 22px; flex: none;
  display: flex; align-items: center; justify-content: center;
  border: 1px solid transparent;
  border-radius: 3px;
}
.tb svg { width: 16px; height: 16px; }
.tb.on { background: #cfe4f8; border-color: #8fbfe8; }
.sep { width: 1px; height: 20px; background: #9a9a9a; flex: none; margin: 0 2.300px; }
.combo {
  height: 19px; display: flex; align-items: center; flex: none;
  background: #fff; position: relative; padding-left: 3px;
  font-size: 12px;
}
.combo-zoom { width: 50px; margin-left: 3px; }
.combo-style { width: 92px; border: 1px solid #9a9a9a; background: #f0f0f0; }
.combo-font { width: 143px; margin-left: 7px; gap: 1px; padding-left: 2px; }
.combo-size { width: 37px; margin-left: 7px; }
.combo-width { width: 40px; margin-left: 2px; font-size: 11px; border: 1px solid #fff; }
.combo-width .drop { right: 1px; }
.tt-g {
  display: inline-block; width: 16px; height: 16px; position: relative;
  font: bold 12px/12px "Liberation Serif", serif; color: #444; letter-spacing: 0;
}
.tt-g em { position: absolute; left: 5px; top: 4px; font: bold 12px/12px "Liberation Serif", serif; color: #111; }
.tt-blue { color: #6f8fbf; }
.tt-blue em { color: #2a5a9a; }
.drop {
  position: absolute; right: 4px; top: 7px;
  width: 0; height: 0;
  border-left: 4.500px solid transparent;
  border-right: 4.500px solid transparent;
  border-top: 5px solid #222;
}
.drop.gray { border-top-color: #8a8a8a; }
.drop.free { position: static; flex: none; margin: 0 1px; }
.fmt { font-family: "Liberation Serif", serif; font-size: 15px; color: #8a8a8a; font-weight: bold; }
.f-i { font-style: italic; }
.f-u { text-decoration: underline; font-weight: normal; }
.f-b { margin-left: 1px; }
.combo-size + .fmt { margin-left: 3px; }
.glyph-a { font-family: "Liberation Sans", sans-serif; font-weight: bold; font-style: italic; font-size: 17px; color: #5a86d0; line-height: 16px; }
.tb-colorA { flex-direction: column; }
.colorbar { width: 15px; height: 3px; background: #000; display: block; }
.ab { background: #c4c4c4; color: #eee; font-size: 10px; width: 14px; height: 13px; display: block; text-align: center; line-height: 12px; }
.graybox { width: 14px; height: 14px; background: #dcdcdc; border: 1px solid #c4c4c4; display: block; }

/* main */
.main { flex: 1; min-height: 0; display: flex; }
.toolcol {
  width: 27px; flex: none;
  padding: 2px 0 0 2px;
  display: flex; flex-direction: column; gap: 0;
}
.tool { width: 22px; height: 23px; display: flex; align-items: center; justify-content: center; border: 1px solid transparent; flex: none; border-radius: 3px; position: relative; }
.tool svg { width: 17px; height: 17px; }
.tool.on { background: #cfe4f8; border-color: #8fbfe8; }
.tool-t { font: bold 16px/18px "Liberation Serif", serif; color: #1f4f90; letter-spacing: 0; margin-left: -4px; }
.ibeam { position: absolute; left: 14px; top: 8px; width: 4px; height: 11px; border: solid #222; border-width: 1px 0; background: linear-gradient(#222,#222) center/1px 100% no-repeat; }

.center { flex: 1; min-width: 0; display: flex; flex-direction: column; }

/* tabs */
.tabrow {
  height: 19px; flex: none;
  display: flex; align-items: flex-end;
  padding-left: 9px;
  background: #f5f5f5 repeating-linear-gradient(45deg, #fff 0 1px, transparent 1px 2px);
  border-bottom: 1px solid #a8a8a8;
}
.tab {
  position: relative;
  height: 16px; line-height: 15px;
  padding: 0 4px 0 5px;
  margin-right: 1px;
  z-index: 0;
  font-size: 11px;
}
.tab::before {
  content: ""; position: absolute; inset: 0 0 -1px 0; z-index: -1;
  background: #fff;
  border: 1px solid #a8a8a8; border-bottom: 0;
  border-radius: 3px 2px 0 0;
  transform: skewX(-14deg);
}
.tab:not(.active)::before { background: #f6f6f6; }

/* panes */
.panes { flex: 1; min-height: 0; display: flex; }
.leftpanes { width: 170px; flex: none; position: relative; display: flex; flex-direction: column; padding-left: 2px; }
.griprow { height: 14px; display: flex; align-items: center; padding-right: 6px; flex: none; width: 160px; }
.grip-h {
  flex: 1; height: 9px;
  background: radial-gradient(circle at 1.500px 1.500px, #bcbcbc 1px, transparent 1.200px) 0 0/4px 4px;
}
.closep { width: 11px; height: 11px; flex: none; }
.treebox {
  height: 298px; width: 158px; flex: none;
  border: 1px solid #a8a8a8;
  position: relative;
  overflow: hidden;
  background: #f0f0f0;
}
.objtree {
  width: 138px; height: 277px; margin: 1px 0 0 1px;
  background: repeating-linear-gradient(#666 0 1px, transparent 1px 2px) 30px 20px/1px 100% no-repeat, #fff;
  overflow: hidden; padding-top: 3px; border-radius: 0 0 3px 0; position: relative;
}
.objtree li { height: 16px; line-height: 16px; display: flex; align-items: center; white-space: nowrap; color: #1a1a44; position: relative; }
.objtree .lv0 { padding-left: 7px; }
.objtree .lv1 { padding-left: 26px; }
.objtree .lv2 { padding-left: 61px; }
.objtree .lv2::before { content: ""; position: absolute; left: 49px; top: 8px; width: 11px; border-top: 1px dotted #555; }
.objtree .lv2::after { content: ""; position: absolute; left: 49px; top: 0; height: 16px; border-left: 1px dotted #555; }
.caret { width: 7px; height: 7px; display: block; flex: none; border: solid #333; border-width: 0 1.500px 1.500px 0; transform: rotate(45deg) translate(-1px, -1px); margin-right: 8px; }
.objtree .ico { width: 16px; height: 16px; flex: none; margin-right: 4px; }
.sel { background: #dcdcdc; padding: 0 4px 0 1px; border-radius: 2px; display: flex; align-items: center; width: 91px; }
.chev { position: absolute; left: 122px; top: 3px; width: 11px; height: 10px; transform: rotate(90deg); }
.vthumb { position: absolute; left: 145px; top: 24px; width: 2px; height: 42px; background: #888; }
.hthumb { position: absolute; left: 19px; top: 287px; width: 50px; height: 2px; background: #888; }

.griprow-2 { margin-top: 3px; height: 14px; }
.objcombo {
  width: 158px; height: 23px; flex: none; margin-top: 4px;
  border: 1px solid #a8a8a8; border-radius: 2px;
  background: #fff;
  display: flex; align-items: center; padding-left: 3px;
  position: relative;
  white-space: nowrap; overflow: hidden;
}
.objcombo span { width: 135px; overflow: hidden; }
.chevdown { width: 6px; height: 6px; border: solid #777; border-width: 0 1px 1px 0; transform: rotate(45deg); margin: -3px 0 0 7px; flex: none; }
.subtabs { height: 24px; flex: none; display: flex; align-items: flex-end; padding-left: 8px; width: 158px; background: #f5f5f5; }
.propgrid {
  width: 158px; height: 606px; flex: none;
  background: #fff;
  border: 1px solid #a8a8a8;
  padding-top: 2px;
  overflow: hidden;
  position: relative;
}
.pr { height: 16px; display: flex; border-bottom: 1px solid #eee; line-height: 15px; white-space: nowrap; }
.pr span:first-child { width: 79px; flex: none; overflow: hidden; padding-left: 12px; border-right: 1px solid #eee; display: flex; align-items: center; letter-spacing: -.35px; }
.pr span:last-child { padding-left: 2px; color: #000080; display: flex; align-items: center; gap: 3px; overflow: hidden; flex: 1; }
.pr.exp span:first-child { padding-left: 2px; }
.pr.bold span { font-weight: bold; }
.plus {
  width: 9px; height: 9px; border: 1px solid #888; flex: none; margin-right: 2px;
  background: linear-gradient(#666,#666) center/5px 1px no-repeat, linear-gradient(#666,#666) center/1px 5px no-repeat, #fff;
}
.cb { width: 11px; height: 11px; border: 1px solid #aaa; background: #fff; display: block; flex: none; margin-left: 1px; position: relative; }
.cb.on { border-color: #666; }
.cb.on::after { content: ""; position: absolute; left: 3px; top: 0; width: 4px; height: 7px; border: solid #000; border-width: 0 2px 2px 0; transform: rotate(40deg); }
.swatch { width: 11px; height: 11px; background: #000; display: block; flex: none; margin-left: 1px; }
.descbox {
  width: 158px; flex: 1; min-height: 0; margin-bottom: 3px;
  background: #fff; border: 1px solid #a8a8a8; border-top: 0;
  display: flex; flex-direction: column; gap: 3px; padding: 2px 0 0 0;
}
.descbox b { font-weight: bold; }

/* designer */
.designer { width: 768px; flex: none; display: flex; flex-direction: column; min-height: 0; }
.hruler-row { height: 24px; flex: none; padding: 5px 0 0 36px; }
.hruler {
  width: 722px; height: 13px; position: relative;
  display: flex;
  background:
    repeating-linear-gradient(90deg, #222 0 1px, transparent 1px 6.430px) 0 6px/100% 1px no-repeat,
    repeating-linear-gradient(90deg, #222 0 1px, transparent 1px 32.150px) 0 4px/100% 5px no-repeat,
    #fff;
  font-size: 9px; line-height: 13px; letter-spacing: 0;
}
.hruler span { width: 64.300px; flex: none; text-align: right; position: relative; left: 3.500px; }
.hmark { position: absolute; left: 413px; top: 0; width: 1px; height: 13px; background: #000; }
.design-body { flex: 1; min-height: 0; display: flex; }
.vruler {
  width: 15px; flex: none; position: relative;
  margin-top: 19px;
  display: flex; flex-direction: column;
  background:
    repeating-linear-gradient(#222 0 1px, transparent 1px 6.430px) 7px 0/1px 100% no-repeat,
    repeating-linear-gradient(#222 0 1px, transparent 1px 32.150px) 5px 0/5px 100% no-repeat,
    #fff;
  font-size: 9px; letter-spacing: 0;
}
.vruler span { height: 64.100px; flex: none; writing-mode: vertical-rl; transform: rotate(180deg); text-align: left; line-height: 15px; position: relative; top: 6px; }
.vmark { position: absolute; left: 0; top: 679px; width: 15px; height: 1px; background: #000; }
.workspace { width: 726px; flex: none; margin-left: 2px; background: #808080; overflow: hidden; padding: 11px 0 0 11px; }
.vstrip { flex: 1; position: relative; background: #f0f0f0; }
.strip-thumb { position: absolute; left: 8px; top: 0; width: 3px; height: 281px; background: #9c9c9c; }
.splitter { position: absolute; right: 0; top: 486px; width: 7px; height: 32px; background: #c8c8c8 radial-gradient(circle at 2px 2px, #888 1px, transparent 1.200px) 0 0/4px 5px; }

/* report page */
.page {
  width: 457px; height: 1100px;
  background-color: #fff;
  background-image:
    linear-gradient(#e4e4e4 1px, transparent 1px),
    linear-gradient(90deg, #e4e4e4 1px, transparent 1px);
  background-size: 32px 32px;
  background-position: 6px 6px;
  border-top: 1px solid #444;
  border-left: 1px solid #555;
  border-right: 1px solid #666;
  padding: 5px 0 0 5px;
}
.sheet {
  width: 448px;
  border-left: 1px dashed #999;
  border-top: 1px dashed #aaa;
  font-size: 16.500px;
  letter-spacing: -.3px;
  color: #111;
  line-height: 20px;
  padding-top: 1px;
}

.c {
  --m: #222;
  background:
    linear-gradient(var(--m),var(--m)) 0 0/5px 1px no-repeat,
    linear-gradient(var(--m),var(--m)) 0 0/1px 5px no-repeat,
    linear-gradient(var(--m),var(--m)) 100% 0/5px 1px no-repeat,
    linear-gradient(var(--m),var(--m)) 100% 0/1px 5px no-repeat,
    linear-gradient(var(--m),var(--m)) 0 100%/5px 1px no-repeat,
    linear-gradient(var(--m),var(--m)) 0 100%/1px 5px no-repeat,
    linear-gradient(var(--m),var(--m)) 100% 100%/5px 1px no-repeat,
    linear-gradient(var(--m),var(--m)) 100% 100%/1px 5px no-repeat;
}

.band-title {
  display: flex; align-items: center;
  padding: 0 0 5px 5px;
  font-size: 18.500px;
  letter-spacing: 0;
  white-space: nowrap;
  width: 446px;
}
.band-title b { font-weight: bold; }
.plain { background: #f0f0f0; border-top: 1px solid #ccc; }
.gold { background: #dda52d; border-top: 1px solid #888; }
.ds { margin-left: auto; padding-right: 3px; display: flex; align-items: center; font-size: 18.700px; }
.ds-ico { width: 14px; height: 18px; margin-right: 3px; margin-top: -8px; }
.bt-head { height: 31px; }
.bt-master { height: 32px; margin-top: 68px; }
.bt-detail { height: 31px; margin-top: 6px; padding-bottom: 2px; }
.bt-footer { height: 26px; margin-top: 7px; padding-bottom: 2px; }
.bt-detail2 { height: 32px; margin-top: 9px; }

.header-body { height: 126px; position: relative; width: 446px; }
.head-grid {
  display: grid;
  grid-template-columns: 97px 9px max-content;
  grid-auto-rows: 22px;
  padding-top: 4px;
  justify-items: start;
  padding-left: 1px;
  letter-spacing: -.1px;
}
.head-grid span { line-height: 25px; white-space: nowrap; }
.head-grid span:nth-child(3n+1) { width: 96px; }
.head-grid span:nth-child(3n+2) { padding-left: 1px; }
.head-grid span:nth-child(3n) { width: 95px; overflow: hidden; }
.head-grid span.v-wide { width: 146px; }
.pic-mini { position: absolute; left: 294px; top: 80px; width: 14px; height: 14px; }
.pic-mini-c { position: absolute; left: 292px; top: 76px; width: 20px; height: 20px; background-size: 5px 1px, 1px 5px, 0 0, 0 0, 0 0, 0 0, 0 0, 0 0; }
.logo { position: absolute; left: 335px; top: -3px; width: 120px; height: 110px; }
.logo-top { font: bold 19px "Liberation Sans", sans-serif; fill: #1d3f86; }
.logo-bot { font: bold 19px "Liberation Sans", sans-serif; fill: #d02030; }
.logo-c { position: absolute; left: 342px; top: 4px; width: 94px; height: 82px; }
.earsiv {
  position: absolute; left: 331px; top: 82px; width: 111px; height: 18px;
  font: bold 14.500px/20px "Liberation Sans", sans-serif; text-align: center; letter-spacing: 0;
}
.guid { position: absolute; left: 1px; top: 106px; width: 443px; height: 20px; text-align: center; padding-left: 4px; white-space: nowrap; background-size: 5px 1px, 1px 5px, 5px 1px, 1px 5px, 0 0, 0 0, 0 0, 0 0; line-height: 26px; }

.firma-box {
  width: 447px; height: 141px;
  border: 2px solid #000;
  white-space: nowrap;
}
.firma-name { font-weight: bold; font-size: 17px; letter-spacing: -.5px; padding: 2px 0 0 1px; height: 51px; line-height: 22px; }
.firma-lines { width: 430px; height: 72px; line-height: 21.500px; }

.master-body { height: 162px; position: relative; width: 446px; white-space: nowrap; padding: 1px 0 0 2px; }
.cari { width: 424px; height: 41px; font-weight: bold; font-size: 17px; letter-spacing: -.5px; line-height: 19px; padding-top: 3px; }
.master-text { width: 424px; height: 118px; line-height: 19.200px; padding-top: 2px; }
.more-btn { position: absolute; left: 409px; top: 42px; width: 16px; height: 16px; border: 1px solid #fff; border-right-color: #999; border-bottom-color: #999; background: #f0f0f0; }
.more-btn::after { content: ""; position: absolute; left: 5px; top: 2px; border-left: 5px solid #000; border-top: 5px solid transparent; border-bottom: 5px solid transparent; }

.trow { display: grid; width: 447px; border: 2px solid #000; white-space: nowrap; }
.trow span { border-right: 2px solid #000; overflow: hidden; padding: 0 1px; display: block; }
.trow span:last-child { border-right: 0; }
.trow .r { text-align: right; padding-right: 3px; }
.cols-item { grid-template-columns: 192px 52px 47px 67px 1fr; }
.trow-head { height: 28px; font: bold 17.500px/24px "Liberation Sans", sans-serif; letter-spacing: 0; }
.trow-head .big { font-size: 18.500px; line-height: 27px; }
.trow-data { height: 28px; line-height: 25px; letter-spacing: -.42px; }
.thin-rule { height: 1px; background: #bcbcbc; margin-top: 1px; width: 446px; }
.rule-end { margin-top: 5px; }

.footer-body { height: 137px; width: 447px; display: grid; grid-template-columns: 192px 255px; padding-top: 4px; }
.kdv-head {
  height: 25px; margin-top: 1px;
  display: grid; grid-template-columns: 50px 60px 80px;
  border: 2px solid #000; border-right: 0;
  font: bold 13.500px/23px "Liberation Sans", sans-serif; text-align: center; letter-spacing: 0;
}
.kdv-rows {
  display: grid; grid-template-columns: 52px 57px 74px; grid-auto-rows: 21px;
  margin-top: 4px; padding-left: 3px;
  font-size: 14px; line-height: 21px; white-space: nowrap;
}
.kdv-rows span { padding-left: 3px; overflow: hidden; }
.footer-right {
  display: grid; grid-template-columns: 137px 114px; grid-auto-rows: 25.400px;
  font: bold 16.800px/23px "Liberation Sans", sans-serif; letter-spacing: 0;
  border: 2px solid #000; border-bottom-width: 2px;
  height: 129px; white-space: nowrap;
}
.footer-right span { border-bottom: 2px solid #000; overflow: hidden; padding-left: 2px; }
.footer-right span:nth-child(odd) { border-right: 3px solid #000; }
.footer-right span:nth-last-child(-n+2) { border-bottom: 0; }

.yaziyla {
  width: 444px; height: 28px; margin-top: 16px; margin-left: 1px;
  font: bold 19.200px/28px "Liberation Sans", sans-serif;
  letter-spacing: .2px; white-space: nowrap;
}
.odeme-title {
  width: 447px; height: 33px;
  border: 2px solid #000; border-top-width: 3px; border-bottom-width: 3px;
  font: bold 16px/28px "Liberation Sans", sans-serif; text-align: center; letter-spacing: 0;
}
.cols-pay { grid-template-columns: 245px 90px 62px 1fr; }
.trow-odeme { height: 27px; border-top: 0; font: bold 17px/24px "Liberation Sans", sans-serif; letter-spacing: 0; }
.trow-odeme span { border-right-width: 3px; }
.trow-data2 { height: 28px; font-family: "Liberation Sans", sans-serif; font-size: 16.300px; line-height: 24px; }

/* right pane */
.rightpane { width: 267px; flex: none; display: flex; flex-direction: column; position: relative; }
.griprow-r { height: 16px; margin-top: 2px; padding: 0 0 0 8px; width: auto; }
.rtabs { height: 16px; flex: none; display: flex; align-items: flex-end; padding-left: 7px; }
.databox { flex: 1; min-height: 0; border: 1px solid #a8a8a8; border-right: 0; margin-bottom: 4px; position: relative; overflow: hidden; background: #f0f0f0; }
.datatools { height: 24px; display: flex; align-items: center; padding: 3px 0 0 2px; width: 214px; background: #f0f0f0; position: relative; }
.datatools .tb { width: 23.4px; }
.datatools .sep-a { margin: 0 12px 0 14px; }
.datatools .sep-b { margin: 0 12px 0 13px; }
.tb-on-strong { background: #6aa2e0; border-radius: 0; }
.fc { font: bold 11px/12px "Liberation Serif", serif; width: 13px; height: 13px; border: 1px solid #3a6ab0; background: #fff; display: block; text-align: center; color: #000; letter-spacing: 0; }
.az { width: 16px; height: 16px; position: relative; display: block; font: bold 10px/10px "Liberation Serif", serif; color: #2a4a90; padding-top: 6px; letter-spacing: 0; }
.az em { position: absolute; left: 8px; top: -1px; font: bold 10px/10px "Liberation Serif", serif; color: #a02020; }
.search { position: absolute; left: 246px; top: 4px; width: 17px; height: 17px; }
.datatree { background: #fff; width: 249px; height: 968px; padding-top: 2px; position: relative; overflow: hidden; }
.root { height: 16px; display: flex; align-items: center; padding-left: 8px; white-space: nowrap; position: relative; }
.root .caret { margin-right: 8px; }
.root .ico { width: 15px; height: 15px; margin-right: 5px; }
.root b { font-weight: bold; color: #111; }
.chev-up { position: absolute; left: 229px; top: 3px; width: 10px; height: 10px; }
.fields { padding-left: 28px; position: relative; }
.fields li { height: 16px; line-height: 16px; padding-left: 13px; display: flex; align-items: center; white-space: nowrap; color: #1f1f3f; position: relative; border-left: 1px dotted #555; }
.fields li::before { content: ""; position: absolute; left: 0; top: 8px; width: 12px; border-top: 1px dotted #555; }
.ft {
  width: 13px; height: 13px; flex: none; margin-right: 7px;
  border: 1px solid #7a9cc6; background: #fff; display: block;
  font: bold 8px/11px "DejaVu Sans", sans-serif; text-align: center; color: #222;
  overflow: hidden; letter-spacing: 0;
}
.ft.a { font: bold 11px/11px "Liberation Serif", serif; }
.ft.k { color: #2f68e8; font-size: 10px; line-height: 11px; }
.ft.d {
  border: 0;
  background:
    linear-gradient(#7fa0d0 0 3px, transparent 3px),
    repeating-linear-gradient(90deg, #b0bcd8 0 1px, transparent 1px 3px),
    repeating-linear-gradient(#b0bcd8 0 1px, transparent 1px 3px),
    #fff;
}
.data-hthumb { position: absolute; left: 16px; bottom: 9px; width: 200px; height: 2px; background: #888; }
.rightpane::after { content: ""; position: absolute; left: 255px; top: 500px; width: 2px; height: 186px; background: #888; }

/* status bar */
.statusbar { height: 17px; flex: none; display: flex; align-items: center; font-size: 11px; color: #111; border-top: 1px solid #ddd; letter-spacing: -.3px; padding-top: 2px; }
.st-unit { width: 75px; padding-left: 2px; height: 100%; border-right: 1px solid #ccc; line-height: 14px; }
.st-mid { width: 230px; height: 100%; border-right: 1px solid #ccc; }
.st-page { padding-left: 4px; }

/* annotations */
.redbox { position: absolute; border: 3px solid #f00; pointer-events: none; }
.redbox-left { left: 29px; top: 440px; width: 166px; height: 666px; }
.redbox-right { left: 968px; top: 154px; width: 243px; height: 999px; }
.marks { position: absolute; left: 0; top: 0; width: 1235px; height: 1189px; pointer-events: none; }
.note { position: absolute; font-family: "Open Sans", sans-serif; font-size: 13.900px; letter-spacing: 0; color: #222; white-space: nowrap; line-height: 19px; font-stretch: normal; }
.note-1 { left: 720px; top: 465px; }
.note-2 { left: 720px; top: 583px; }
```
